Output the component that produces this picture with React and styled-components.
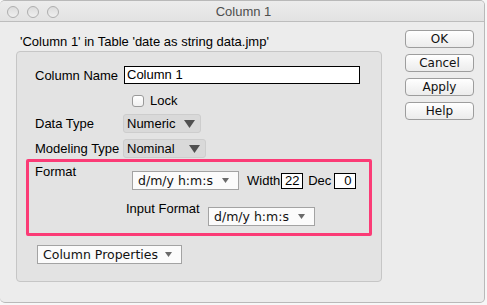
import React from "react";
import styled, { createGlobalStyle } from "styled-components";

const Global = createGlobalStyle`
  html, body { margin: 0; padding: 0; background: #f7f7f7; }
  body { font-family: "Liberation Sans", Arial, sans-serif; font-size: 13px; color: #000; }
`;

const Window = styled.div`
  width: 485px;
  height: 303px;
  box-sizing: border-box;
  background: #ececec;
  border: 1px solid #b9b9b9;
  border-left: none;
  border-radius: 5px;
  overflow: hidden;
  display: flex;
  flex-direction: column;
`;

const TitleBar = styled.div`
  height: 21px;
  flex: none;
  box-sizing: border-box;
  border-bottom: 1px solid #bdbdbd;
  background: linear-gradient(#ececec, #e2e2e2);
  display: flex;
  align-items: center;
  padding-left: 7px;
`;

const Light = styled.span`
  width: 10px;
  height: 10px;
  border-radius: 50%;
  border: 1px solid #aeaeae;
  background: linear-gradient(#dcdcdc, #efefef);
  margin-right: 8px;
  margin-top: 1px;
`;

const Title = styled.div`
  flex: 1;
  text-align: center;
  color: #4e4e4e;
  font-size: 13px;
  margin-right: 74px;
  margin-left: 10px;
`;

const Body = styled.div`
  flex: 1;
  display: flex;
`;

const Main = styled.div`
  width: 366px;
  padding-left: 16px;
  display: flex;
  flex-direction: column;
`;

const Subtitle = styled.div`
  margin-top: 12px;
  margin-left: 4px;
  height: 16px;
  line-height: 16px;
`;

const Panel = styled.div`
  margin-top: 1px;
  height: 231px;
  box-sizing: border-box;
  background: #e3e3e3;
  border: 1px solid #c6c6c6;
  border-radius: 4px;
  padding: 14px 0 0 9px;
  display: flex;
  flex-direction: column;
`;

const Row = styled.div`
  display: flex;
  align-items: center;
  padding-left: 9px;
  margin-top: ${(p) => p.$mt || 0}px;
`;

const Label = styled.span`
  width: ${(p) => p.$w || 89}px;
  flex: none;
  white-space: nowrap;
  line-height: 15px;
  margin-top: ${(p) => p.$mt || 0}px;
`;

const TextInput = styled.div`
  width: 236px;
  height: 18px;
  box-sizing: border-box;
  border: 1px solid #000;
  background: #fff;
  padding-left: 2px;
  line-height: 16px;
`;

const Check = styled.span`
  width: 12px;
  height: 12px;
  box-sizing: border-box;
  border: 1px solid #9a9a9a;
  border-radius: 3px;
  background: linear-gradient(#ffffff, #f0f0f0);
  margin-left: 97px;
  margin-right: 6px;
`;

const GrayPopup = styled.div`
  width: ${(p) => p.$w}px;
  height: 19px;
  box-sizing: border-box;
  background: #d9d9d9;
  border: 1px solid #cdcdcd;
  border-radius: 3px;
  display: flex;
  align-items: center;
  justify-content: space-between;
  padding: 0 5px 0 3px;
  margin-left: -1px;
`;

const WhitePopup = styled.div`
  width: ${(p) => p.$w}px;
  height: 19px;
  box-sizing: border-box;
  background: #fbfbfb;
  border: 1px solid #a3a3a3;
  display: flex;
  align-items: center;
  justify-content: space-between;
  padding: 0 9px 0 5px;
  font-family: "DejaVu Sans", "Liberation Sans", sans-serif;
  font-size: 12.5px;
  color: #111;
  flex: none;
  margin-top: ${(p) => p.$mt || 0}px;
`;

const PinkBox = styled.div`
  width: 346px;
  height: 77px;
  box-sizing: border-box;
  border: 3px solid #fb3b76;
  border-radius: 2px;
  margin-top: 1px;
  display: flex;
  flex-direction: column;
`;

const FormatRow = styled.div`
  display: flex;
  align-items: flex-start;
  padding-left: 6px;
`;

const Inline = styled.div`
  display: flex;
  align-items: center;
  margin-top: 9px;
`;

const SmallLabel = styled.span`
  margin-left: ${(p) => p.$ml || 0}px;
  margin-right: ${(p) => p.$mr || 1}px;
`;

const NumBox = styled.div`
  width: 22px;
  height: 16px;
  box-sizing: border-box;
  border: 1px solid #000;
  background: #fff;
  text-align: ${(p) => p.$align || "center"};
  padding-right: ${(p) => (p.$align === "right" ? 4 : 0)}px;
  line-height: 14px;
`;

const InputFormatRow = styled.div`
  display: flex;
  align-items: flex-start;
  padding-left: 97px;
  margin-top: 11px;
`;

const PropsRow = styled.div`
  padding-left: 11px;
  margin-top: 9px;
`;

const Buttons = styled.div`
  display: flex;
  flex-direction: column;
  gap: 6px;
  padding-top: 8px;
  margin-left: 23px;
`;

const Button = styled.div`
  width: 69px;
  height: 18px;
  box-sizing: border-box;
  border: 1px solid #9d9d9d;
  border-radius: 4px;
  background: linear-gradient(#ffffff, #f3f3f3 60%, #ececec);
  display: flex;
  align-items: center;
  justify-content: center;
  font-family: "DejaVu Sans", "Liberation Sans", sans-serif;
  font-size: 12px;
  color: #111;
`;

const BigArrow = () => (
  <svg width="11" height="8" viewBox="0 0 11 8">
    <polygon points="0,0 11,0 5.5,8" fill="#505050" />
  </svg>
);

const SmallArrow = () => (
  <svg width="7" height="5" viewBox="0 0 7 5">
    <polygon points="0,0 7,0 3.5,5" fill="#6a6a6a" />
  </svg>
);

export default function App() {
  return (
    <>
      <Global />
      <Window>
        <TitleBar>
          <Light />
          <Light />
          <Light />
          <Title>Column 1</Title>
        </TitleBar>
        <Body>
          <Main>
            <Subtitle>'Column 1' in Table 'date as string data.jmp'</Subtitle>
            <Panel>
              <Row>
                <Label>Column Name</Label>
                <TextInput>Column 1</TextInput>
              </Row>
              <Row $mt={9}>
                <Check />
                <span>Lock</span>
              </Row>
              <Row $mt={6}>
                <Label>Data Type</Label>
                <GrayPopup $w={78}>
                  <span>Numeric</span>
                  <BigArrow />
                </GrayPopup>
              </Row>
              <Row $mt={6}>
                <Label>Modeling Type</Label>
                <GrayPopup $w={83}>
                  <span>Nominal</span>
                  <BigArrow />
                </GrayPopup>
              </Row>
              <PinkBox>
                <FormatRow>
                  <Label $w={97} $mt={2}>Format</Label>
                  <Inline>
                    <WhitePopup $w={107}>
                      <span>d/m/y h:m:s</span>
                      <SmallArrow />
                    </WhitePopup>
                    <SmallLabel $ml={8}>Width</SmallLabel>
                    <NumBox>22</NumBox>
                    <SmallLabel $ml={5} $mr={3}>Dec</SmallLabel>
                    <NumBox $align="right">0</NumBox>
                  </Inline>
                </FormatRow>
                <InputFormatRow>
                  <Label $w={82}>Input Format</Label>
                  <WhitePopup $w={107} $mt={6}>
                    <span>d/m/y h:m:s</span>
                    <SmallArrow />
                  </WhitePopup>
                </InputFormatRow>
              </PinkBox>
              <PropsRow>
                <WhitePopup $w={145}>
                  <span>Column Properties</span>
                  <SmallArrow />
                </WhitePopup>
              </PropsRow>
            </Panel>
          </Main>
          <Buttons>
            <Button>OK</Button>
            <Button>Cancel</Button>
            <Button>Apply</Button>
            <Button>Help</Button>
          </Buttons>
        </Body>
      </Window>
    </>
  );
}
